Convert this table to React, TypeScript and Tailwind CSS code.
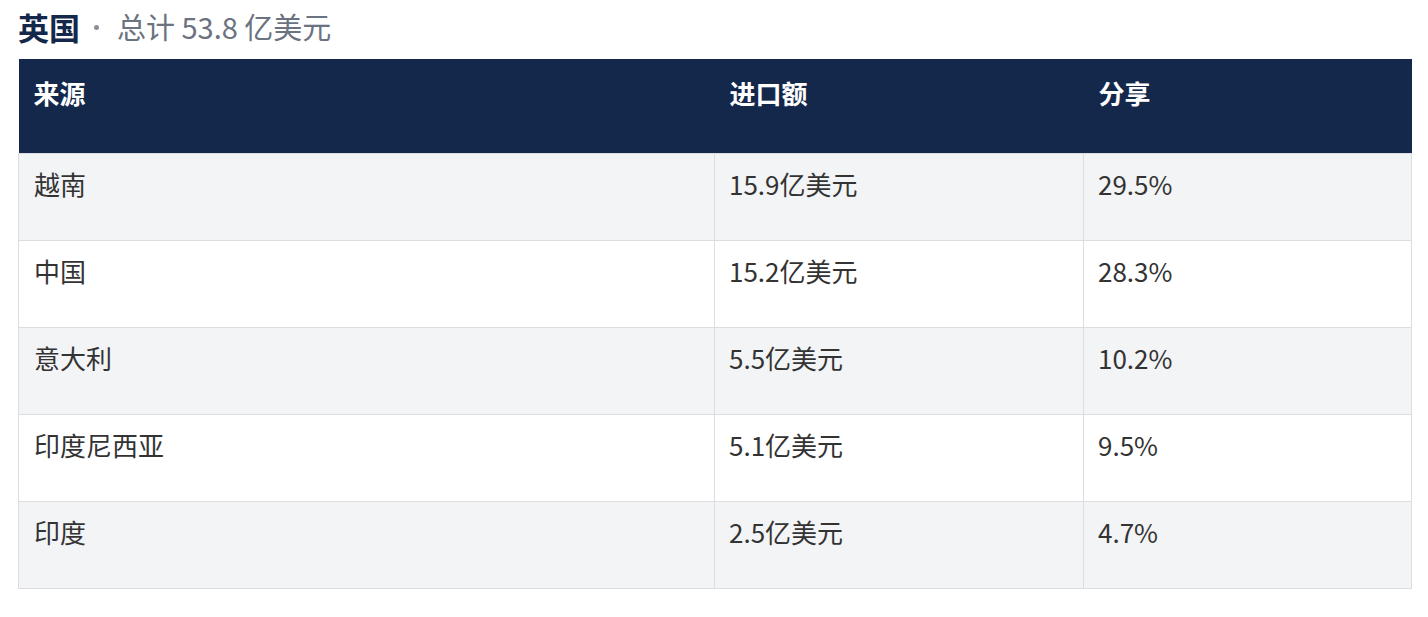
import React from 'react';

const rows = [
  { source: '越南', value: '15.9亿美元', share: '29.5%' },
  { source: '中国', value: '15.2亿美元', share: '28.3%' },
  { source: '意大利', value: '5.5亿美元', share: '10.2%' },
  { source: '印度尼西亚', value: '5.1亿美元', share: '9.5%' },
  { source: '印度', value: '2.5亿美元', share: '4.7%' },
];

export default function App() {
  return (
    <div
      className="w-[1428px] h-[617px] bg-white px-[18px] pt-[3px]"
      style={{ fontFamily: '"Noto Sans CJK SC", "Noto Sans", sans-serif' }}
    >
      <div className="flex items-center h-[46px] mb-[10px] leading-none">
        <span className="font-bold text-[31px] text-[#14284b]">英国</span>
        <span className="w-[5px] h-[5px] rounded-full bg-[#8a8f98] ml-[14px] mr-[18px] mt-[2px]" />
        <span className="text-[29px] text-[#6b7280]">总计 53.8 亿美元</span>
      </div>

      <table className="w-[1393px] border-collapse table-fixed text-[26px] leading-[36px]">
        <colgroup>
          <col className="w-[696px]" />
          <col className="w-[369px]" />
          <col className="w-[328px]" />
        </colgroup>
        <thead>
          <tr className="bg-[#14284b] text-white h-[94px]">
            <th className="text-left align-top font-bold pt-[16px] px-[15px]">来源</th>
            <th className="text-left align-top font-bold pt-[16px] px-[15px]">进口额</th>
            <th className="text-left align-top font-bold pt-[16px] px-[15px]">分享</th>
          </tr>
        </thead>
        <tbody className="text-[#333333]">
          {rows.map((r, i) => (
            <tr key={i} className={`h-[87px] ${i % 2 === 0 ? 'bg-[#f3f4f6]' : 'bg-white'}`}>
              <td className="align-top pt-[12px] px-[15px] border border-[#dcdde0]">{r.source}</td>
              <td className="align-top pt-[12px] px-[14px] border border-[#dcdde0]">{r.value}</td>
              <td className="align-top pt-[12px] px-[14px] border border-[#dcdde0]">{r.share}</td>
            </tr>
          ))}
        </tbody>
      </table>
    </div>
  );
}
